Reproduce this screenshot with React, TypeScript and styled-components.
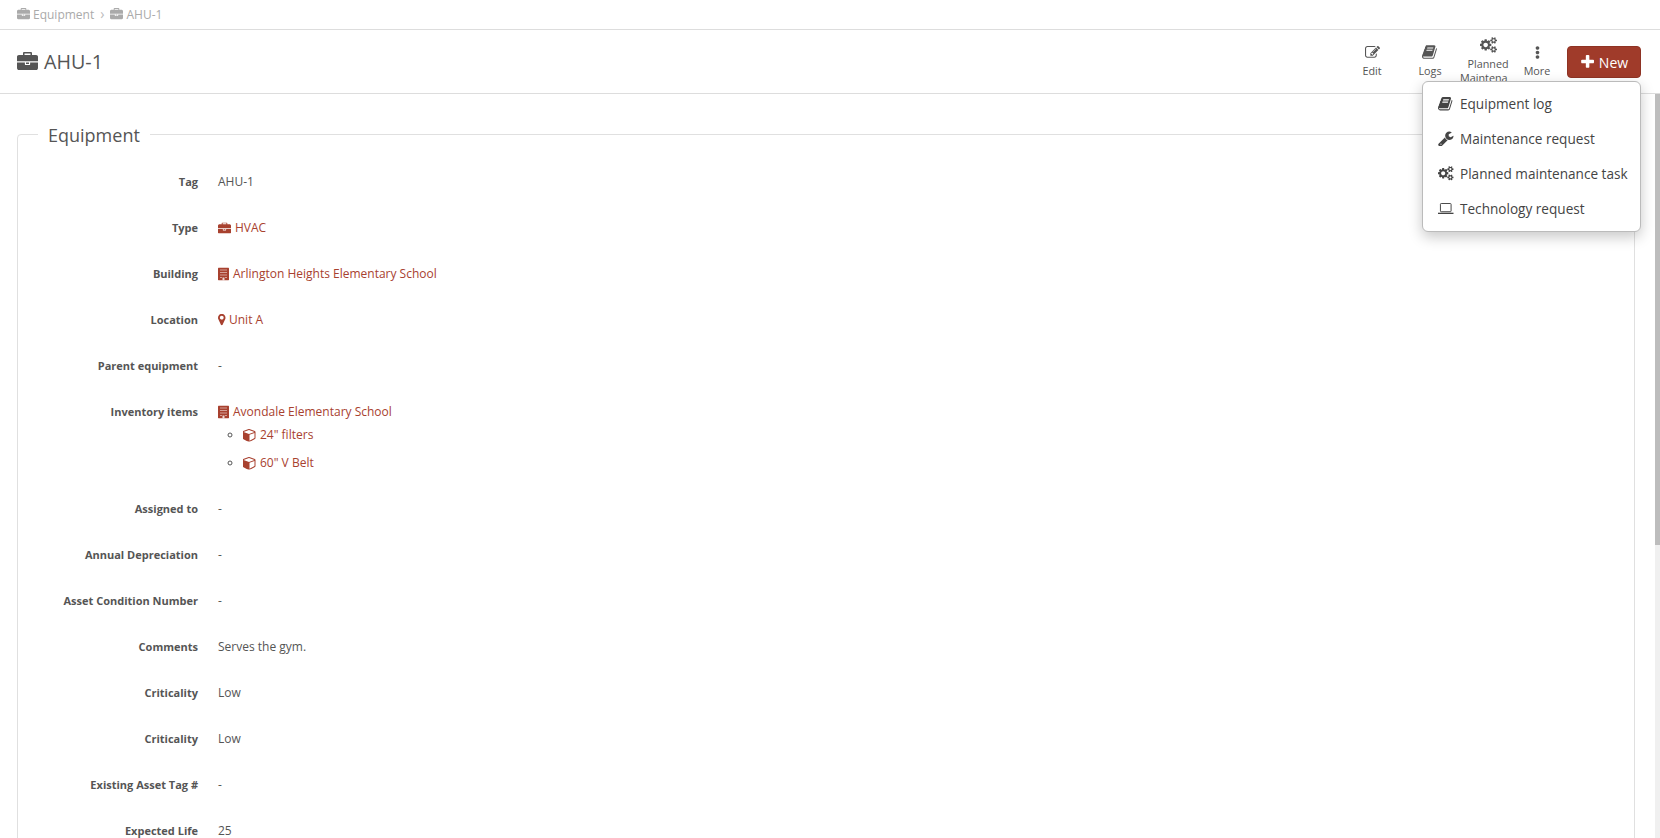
import React from "react";
import styled, { createGlobalStyle } from "styled-components";
import { FaEllipsisV } from "react-icons/fa";

const Global = createGlobalStyle`
  html, body { margin: 0; padding: 0; height: 100%; overflow: hidden; background: #fff; }
  body { font-family: "Open Sans", "Lato", sans-serif; font-size: 12px; color: #555; }
  #root { height: 100%; }
`;

const Icon = ({ vb, d, ratio = 1 }: { vb: string; d: string; ratio?: number }) => (
  <svg viewBox={vb} width="1em" height={`${ratio}em`} fill="currentColor">
    <path d={d} />
  </svg>
);

const Briefcase = () => (
  <Icon vb="0 0 1792 1536" ratio={0.857} d="M640 256h512v-128h-512v128zm1152 640v480q0 66-47 113t-113 47h-1472q-66 0-113-47t-47-113v-480h672v160q0 26 19 45t45 19h320q26 0 45-19t19-45v-160h672zm-768 0v128h-256v-128h256zm768-480v384h-1792v-384q0-66 47-113t113-47h352v-160q0-40 28-68t68-28h576q40 0 68 28t28 68v160h352q66 0 113 47t47 113z" />
);
const Book = () => (
  <Icon vb="0 0 1792 1792" d="M1639 478q40 57 18 129l-275 906q-19 64-76.500 107.500t-122.500 43.500h-923q-77 0-148.500-53.500t-99.500-131.500q-24-67-2-127 0-4 3-27t4-37q1-8-3-21.500t-3-19.500q2-11 8-21t16.500-23.500 16.500-23.500q23-38 45-91.500t30-91.500q3-10 .5-30t-.5-28q3-11 17-28t17-23q21-36 42-92t25-90q1-9-2.500-32t.5-28q4-13 22-30.500t22-22.500q19-26 42.500-84.500t27.500-96.500q1-8-3-25.500t-2-26.500q2-8 9-18t18-23 17-21q8-12 16.500-30.500t15-35 16-36 19.500-32 26.500-23.500 36-11.500 47.500 5.500l-1 3q38-9 51-9h761q74 0 114 56t18 130l-274 906q-36 119-71.500 153.500t-128.500 34.500h-869q-27 0-38 15-11 16-1 43 24 70 144 70h923q29 0 56-15.500t35-41.500l300-987q7-22 5-57 38 15 59 43zm-1064 2q-4 13 2 22.500t20 9.500h608q13 0 25.500-9.500t16.500-22.500l21-64q4-13-2-22.500t-20-9.500h-608q-13 0-25.500 9.500t-16.500 22.500zm-83 256q-4 13 2 22.500t20 9.500h608q13 0 25.500-9.500t16.500-22.500l21-64q4-13-2-22.500t-20-9.500h-608q-13 0-25.500 9.500t-16.500 22.500z" />
);
const Wrench = () => (
  <Icon vb="0 64 1664 1664" d="M384 1472q0-26-19-45t-45-19-45 19-19 45 19 45 45 19 45-19 19-45zm644-420l-682 682q-37 37-90 37-52 0-91-37l-106-108q-38-36-38-90 0-53 38-91l681-681q39 98 114.500 173.500t173.500 114.500zm634-435q0 39-23 106-47 134-164.500 217.500t-258.500 83.500q-185 0-316.500-131.500t-131.500-316.500 131.500-316.500 316.500-131.500q58 0 121.500 16.500t107.500 46.500q16 11 16 28t-16 28l-293 169v224l193 107q5-3 79-48.500t135.500-81 70.500-35.500q15 0 23.500 10t8.500 25z" />
);
const Cogs = () => (
  <Icon vb="0 0 1920 1792" ratio={0.933} d="M896 896q0-106-75-181t-181-75-181 75-75 181 75 181 181 75 181-75 75-181zm768 512q0-52-38-90t-90-38-90 38-38 90q0 53 37.500 90.500t90.500 37.500 90.500-37.500 37.500-90.500zm0-1024q0-52-38-90t-90-38-90 38-38 90q0 53 37.500 90.500t90.500 37.500 90.500-37.500 37.500-90.500zm-384 421v185q0 10-7 19.500t-16 10.500l-155 24q-11 35-32 76 34 48 90 115 7 11 7 20 0 12-7 19-23 30-82.500 89.500t-78.500 59.500q-11 0-21-7l-115-90q-37 19-77 31-11 108-23 155-7 24-30 24h-186q-11 0-20-7.500t-10-17.500l-23-153q-34-10-75-31l-118 89q-7 7-20 7-11 0-21-8-144-133-144-160 0-9 7-19 10-14 41-53t47-61q-23-44-35-82l-152-24q-10-1-17-9.500t-7-19.500v-185q0-10 7-19.500t16-10.500l155-24q11-35 32-76-34-48-90-115-7-11-7-20 0-12 7-20 22-30 82-89t79-59q11 0 21 7l115 90q34-18 77-32 11-108 23-154 7-24 30-24h186q11 0 20 7.500t10 17.500l23 153q34 10 75 31l118-89q8-7 20-7 11 0 21 8 144 133 144 160 0 8-7 19-12 16-42 54t-45 60q23 48 34 82l152 23q10 2 17 10.500t7 19.500zm640 533v140q0 16-149 31-12 27-30 52 51 113 51 138 0 4-4 7-122 71-124 71-8 0-46-47t-52-68q-20 2-30 2t-30-2q-14 21-52 68t-46 47q-2 0-124-71-4-3-4-7 0-25 51-138-18-25-30-52-149-15-149-31v-140q0-16 149-31 13-29 30-52-51-113-51-138 0-4 4-7 4-2 35-20t59-34 30-16q8 0 46 46.500t52 67.500q20-2 30-2t30 2q51-71 92-112l6-2q4 0 124 70 4 3 4 7 0 25-51 138 17 23 30 52 149 15 149 31zm0-1024v140q0 16-149 31-12 27-30 52 51 113 51 138 0 4-4 7-122 71-124 71-8 0-46-47t-52-68q-20 2-30 2t-30-2q-14 21-52 68t-46 47q-2 0-124-71-4-3-4-7 0-25 51-138-18-25-30-52-149-15-149-31v-140q0-16 149-31 13-29 30-52-51-113-51-138 0-4 4-7 4-2 35-20t59-34 30-16q8 0 46 46.500t52 67.500q20-2 30-2t30 2q51-71 92-112l6-2q4 0 124 70 4 3 4 7 0 25-51 138 17 23 30 52 149 15 149 31z" />
);
const Edit = () => (
  <Icon vb="0 128 1792 1536" ratio={0.857} d="M888 1184l116-116-152-152-116 116v56h96v96h56zm440-720q-16-16-33 1l-350 350q-17 17-1 33t33-1l350-350q17-17 1-33zm80 594v190q0 119-84.500 203.500t-203.500 84.500h-832q-119 0-203.500-84.500t-84.500-203.500v-832q0-119 84.500-203.500t203.500-84.500h832q63 0 117 25 15 7 18 23 3 17-9 29l-49 49q-14 14-32 8-23-6-45-6h-832q-66 0-113 47t-47 113v832q0 66 47 113t113 47h832q66 0 113-47t47-113v-126q0-13 9-22l64-64q15-15 35-7t20 29zm-96-738l288 288-672 672h-288v-288zm444 132l-92 92-288-288 92-92q28-28 68-28t68 28l152 152q28 28 28 68t-28 68z" />
);
const Plus = () => (
  <Icon vb="64 128 1536 1536" d="M1600 736v192q0 40-28 68t-68 28h-416v416q0 40-28 68t-68 28h-192q-40 0-68-28t-28-68v-416h-416q-40 0-68-28t-28-68v-192q0-40 28-68t68-28h416v-416q0-40 28-68t68-28h192q40 0 68 28t28 68v416h416q40 0 68 28t28 68z" />
);
const Marker = () => (
  <Icon vb="0 128 1024 1664" ratio={1.625} d="M768 640q0-106-75-181t-181-75-181 75-75 181 75 181 181 75 181-75 75-181zm256 0q0 109-33 179l-364 774q-16 33-47.500 52t-67.500 19-67.500-19-46.500-52l-365-774q-33-70-33-179 0-212 150-362t362-150 362 150 150 362z" />
);
const Cube = () => (
  <Icon vb="64 64 1664 1664" d="M896 1629l640-349v-636l-640 233v752zm-64-865l698-254-698-254-698 254zm832-252v768q0 35-18 65t-49 47l-704 384q-28 16-61 16t-61-16l-704-384q-31-17-49-47t-18-65v-768q0-40 23-73t61-47l704-256q22-8 44-8t44 8l704 256q38 14 61 47t23 73z" />
);
const BuildingIcon = () => (
  <svg viewBox="0 0 11 13" width="11" height="13">
    <rect width="11" height="13" rx="0.800" fill="currentColor" />
    <path d="M2 2h7v1H2zM2 4.500h7v1H2zM2 7h7v1H2zM2 9.500h2v1H2zM7 9.500h2v1H7z" fill="#fff" opacity="0.500" />
    <rect x="4.500" y="10" width="2" height="3" fill="#fff" opacity="0.800" />
  </svg>
);
const LaptopIcon = () => (
  <svg viewBox="0 0 16 12" width="1em" height="0.75em" fill="none" stroke="currentColor" strokeWidth="1">
    <rect x="2.500" y="0.500" width="11" height="8.500" rx="0.800" />
    <path d="M0 10.700h16" strokeWidth="1.400" />
  </svg>
);

const Page = styled.div`
  height: 838px;
  display: flex;
  flex-direction: column;
  position: relative;
`;
const Breadcrumbs = styled.nav`
  height: 30px;
  flex: none;
  box-sizing: border-box;
  border-bottom: 1px solid #ddd;
  padding: 0 0 1px 17px;
  display: flex;
  align-items: center;
  color: #aaa;
  font-size: 12px;
  svg { font-size: 13px; margin-right: 3px; }
`;
const Sep = styled.span`
  margin: 0 6px;
  color: #bbb;
  font-size: 14px;
  line-height: 14px;
`;
const Header = styled.header`
  height: 64px;
  flex: none;
  box-sizing: border-box;
  border-bottom: 1px solid #ddd;
  display: flex;
  justify-content: space-between;
  padding-left: 17px;
`;
const Title = styled.h1`
  margin: 0 0 1px;
  font-weight: 400;
  font-size: 19.700px;
  color: #555;
  display: flex;
  align-items: center;
  gap: 6px;
  svg { font-size: 21px; color: #555; }
`;
const Toolbar = styled.div`
  display: flex;
  align-items: flex-start;
  padding-right: 19px;
`;
const Tool = styled.button<{ $w: number }>`
  width: ${(p) => p.$w}px;
  height: 61px;
  border: 0;
  background: none;
  padding: 0;
  font: inherit;
  font-size: 10.800px;
  line-height: 14px;
  color: #555;
  display: flex;
  flex-direction: column;
  align-items: center;
  justify-content: center;
`;
const ToolIcon = styled.span<{ $size: number }>`
  height: 18px;
  margin-bottom: 3px;
  display: flex;
  align-items: center;
  font-size: ${(p) => p.$size}px;
`;
const ClippedLine = styled.span`
  align-self: flex-start;
  width: 48px;
  margin-left: 1px;
  overflow: hidden;
  white-space: nowrap;
`;
const NewButton = styled.button`
  margin: 16px 0 0 10px;
  width: 74px;
  height: 32px;
  box-sizing: border-box;
  border: 1px solid #8e3324;
  border-radius: 4px;
  background: #a03b2a;
  color: #fff;
  font: inherit;
  font-size: 14px;
  display: flex;
  align-items: center;
  justify-content: center;
  gap: 5px;
  svg { font-size: 14px; }
`;
const Menu = styled.ul`
  position: absolute;
  z-index: 5;
  left: 1422px;
  top: 81px;
  width: 219px;
  height: 151px;
  box-sizing: border-box;
  margin: 0;
  padding: 4px 0;
  list-style: none;
  background: #fff;
  border: 1px solid #bbb;
  border-radius: 6px;
  box-shadow: 0 5px 14px rgba(0, 0, 0, 0.22);
`;
const MenuItem = styled.li`
  height: 35px;
  display: flex;
  align-items: center;
  font-size: 13.600px;
  color: #444;
`;
const MenuGlyph = styled.span`
  width: 37px;
  padding-left: 15px;
  box-sizing: border-box;
  flex: none;
  display: flex;
  align-items: center;
  font-size: 15.500px;
  color: #444;
`;
const Body = styled.div`
  flex: 1;
  min-height: 0;
  display: flex;
`;
const Scroller = styled.main`
  flex: 1;
  min-width: 0;
  overflow: hidden;
  padding: 0 20px 0 17px;
`;
const ScrollTrack = styled.div`
  flex: none;
  width: 5px;
  background: #f0f0f0;
`;
const ScrollThumb = styled.div`
  height: 451px;
  background: #bdbdbd;
`;
const Fieldset = styled.fieldset`
  margin: 27px 0 0;
  padding: 14px 0 40px;
  border: 1px solid #e0e0e0;
  border-radius: 4px;
  min-width: 0;
  box-sizing: border-box;
  min-height: 1199px;
`;
const Legend = styled.legend`
  margin-left: 20px;
  padding: 2px 10px 0;
  font-size: 18px;
  color: #555;
  line-height: 24px;
`;
const Row = styled.div`
  display: grid;
  grid-template-columns: 180px 1fr;
  column-gap: 20px;
  padding: 8px 0 12px;
  line-height: 26px;
`;
const Label = styled.div`
  text-align: right;
  font-weight: 700;
  font-size: 11px;
  color: #555;
  line-height: 26px;
`;
const Value = styled.div`
  color: #555;
`;
const Link = styled.a`
  color: #a8412f;
`;
const Glyph = styled.span<{ $w: number; $s?: number }>`
  display: inline-block;
  width: ${(p) => p.$w}px;
  height: 0;
  vertical-align: 4.500px;
  font-size: ${(p) => p.$s ?? 13}px;
  svg { display: block; transform: translateY(-50%); }
`;
const SubList = styled.ul`
  margin: -4px 0 -1px;
  padding: 0 0 0 25px;
  list-style: circle;
  li { line-height: 28px; }
  li::marker { color: #555; }
`;

const rows: [string, React.ReactNode][] = [
  ["Tag", "AHU-1"],
  ["Type", <Link><Glyph $w={17}><Briefcase /></Glyph>HVAC</Link>],
  ["Building", <Link><Glyph $w={15}><BuildingIcon /></Glyph>Arlington Heights Elementary School</Link>],
  ["Location", <Link><Glyph $w={11} $s={7.500}><Marker /></Glyph>Unit A</Link>],
  ["Parent equipment", "-"],
  ["Inventory items", <>
    <Link><Glyph $w={15}><BuildingIcon /></Glyph>Avondale Elementary School</Link>
    <SubList>
      <li><Link><Glyph $w={17}><Cube /></Glyph>24" filters</Link></li>
      <li><Link><Glyph $w={17}><Cube /></Glyph>60" V Belt</Link></li>
    </SubList>
  </>],
  ["Assigned to", "-"],
  ["Annual Depreciation", "-"],
  ["Asset Condition Number", "-"],
  ["Comments", "Serves the gym."],
  ["Criticality", "Low"],
  ["Criticality", "Low"],
  ["Existing Asset Tag #", "-"],
  ["Expected Life", "25"],
];

export default function App() {
  return (
    <Page>
      <Global />
      <Breadcrumbs>
        <Briefcase />Equipment<Sep>›</Sep><Briefcase />AHU-1
      </Breadcrumbs>
      <Header>
        <Title><Briefcase />AHU-1</Title>
        <Toolbar>
          <Tool $w={58}><ToolIcon $size={15}><Edit /></ToolIcon>Edit</Tool>
          <Tool $w={58}><ToolIcon $size={16}><Book /></ToolIcon>Logs</Tool>
          <Tool $w={58}><ToolIcon $size={17}><Cogs /></ToolIcon>Planned<ClippedLine>Maintenance</ClippedLine></Tool>
          <Tool $w={40}><ToolIcon $size={13}><FaEllipsisV /></ToolIcon>More</Tool>
          <NewButton><Plus />New</NewButton>
        </Toolbar>
      </Header>
      <Menu>
        <MenuItem><MenuGlyph><Book /></MenuGlyph>Equipment log</MenuItem>
        <MenuItem><MenuGlyph><Wrench /></MenuGlyph>Maintenance request</MenuItem>
        <MenuItem><MenuGlyph><Cogs /></MenuGlyph>Planned maintenance task</MenuItem>
        <MenuItem><MenuGlyph><LaptopIcon /></MenuGlyph>Technology request</MenuItem>
      </Menu>
      <Body>
        <Scroller>
          <Fieldset>
            <Legend>Equipment</Legend>
            {rows.map(([l, v], i) => (
              <Row key={i}><Label>{l}</Label><Value>{v}</Value></Row>
            ))}
          </Fieldset>
        </Scroller>
        <ScrollTrack><ScrollThumb /></ScrollTrack>
      </Body>
    </Page>
  );
}
